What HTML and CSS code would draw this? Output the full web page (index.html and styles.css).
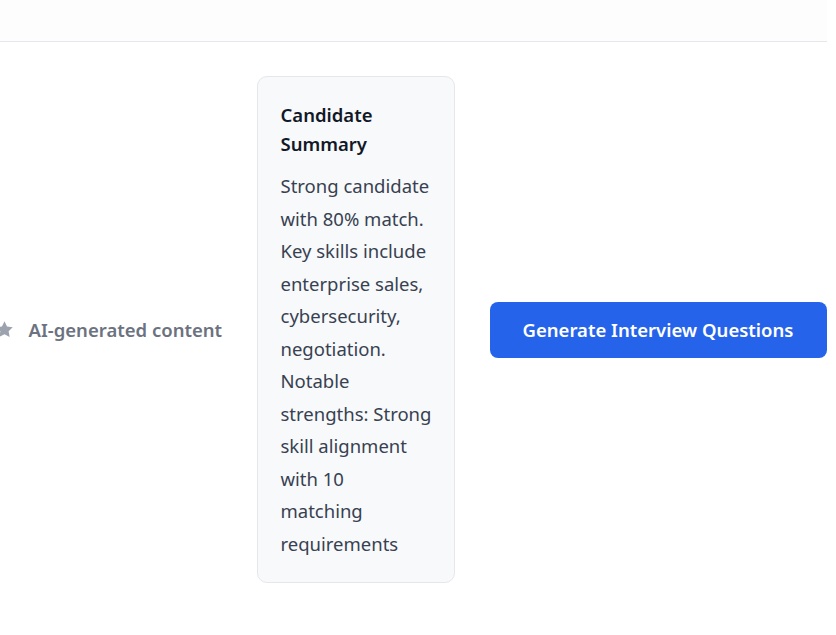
FILE: index.html
```html
<!DOCTYPE html>
<html lang="en">
<head>
<meta charset="utf-8">
<title>Candidate Summary</title>
<link rel="stylesheet" href="styles.css">
</head>
<body>
<div class="page">
  <header class="topbar"></header>
  <main class="main">
    <div class="row">
      <div class="ai-label">
        <svg class="star" viewBox="0 0 24 24" aria-hidden="true"><path d="M12 1.5l3.2 6.6 7.2 1-5.2 5.1 1.3 7.2L12 18l-6.5 3.4 1.3-7.2-5.2-5.1 7.2-1z"/></svg>
        <span>AI-generated content</span>
      </div>
      <section class="card">
        <h2 class="card-title">Candidate Summary</h2>
        <p class="card-text">Strong candidate with 80% match. Key skills include enterprise sales, cybersecurity, negotiation. Notable strengths: Strong skill alignment with 10<br>matching requirements</p>
      </section>
      <button class="btn-primary" type="button">Generate Interview Questions</button>
    </div>
  </main>
</div>
</body>
</html>
```
FILE: styles.css
```css
html, body {
  margin: 0;
  padding: 0;
  background: #ffffff;
}
body {
  font-family: "Noto Sans", "Open Sans", sans-serif;
  overflow: hidden;
}
.page {
  width: 827px;
  height: 635px;
}
.topbar {
  height: 41px;
  background: #fdfdfd;
  border-bottom: 1px solid #e5e7eb;
}
.main {
  padding-top: 34px;
  padding-right: 4px;
  display: flex;
  justify-content: center;
}
.row {
  display: flex;
  align-items: center;
  gap: 35px;
  flex-shrink: 0;
}
.ai-label {
  display: flex;
  align-items: center;
  gap: 15px;
  color: #6b7280;
  font-size: 18.5px;
  font-weight: 600;
  width: 225px;
  white-space: nowrap;
}
.star {
  width: 19px;
  height: 19px;
  margin-left: -2px;
  fill: #9ca3af;
  flex-shrink: 0;
}
.card {
  width: 198px;
  box-sizing: border-box;
  padding: 23px 18px 22px 23px;
  background: #f8f9fb;
  border: 1px solid #e5e7eb;
  border-radius: 10px;
}
.card-title {
  margin: 0 0 12px;
  font-size: 18.5px;
  font-weight: 600;
  line-height: 29px;
  color: #111827;
}
.card-text {
  margin: 0;
  font-size: 18.5px;
  line-height: 32.5px;
  color: #374151;
}
.btn-primary {
  width: 337px;
  height: 56px;
  border: none;
  border-radius: 8px;
  background: #2563eb;
  color: #ffffff;
  font-family: inherit;
  font-size: 18.5px;
  font-weight: 600;
  cursor: pointer;
}
```
